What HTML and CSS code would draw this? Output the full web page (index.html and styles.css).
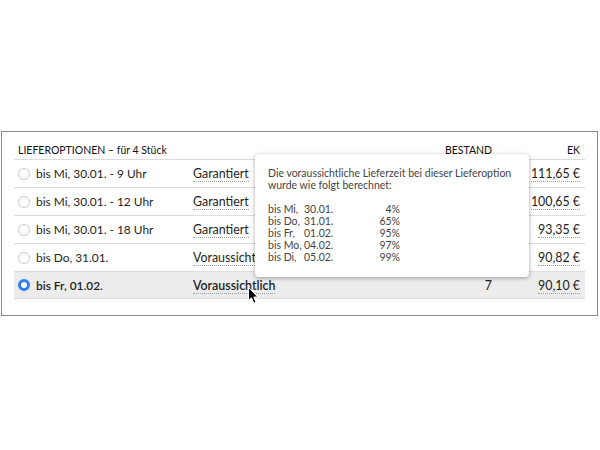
FILE: index.html
```html
<!DOCTYPE html>
<html lang="de">
<head>
<meta charset="utf-8">
<link rel="stylesheet" href="styles.css">
</head>
<body>
<div class="panel">
  <div class="table">
    <div class="row head">
      <div class="c1">LIEFEROPTIONEN&nbsp;– für 4 Stück</div>
      <div class="c2"></div>
      <div class="c3">BESTAND</div>
      <div class="c4">EK</div>
    </div>
    <div class="row">
      <div class="c1"><span class="radio"></span>bis Mi, 30.01. - 9 Uhr</div>
      <div class="c2"><span class="dot">Garantiert</span></div>
      <div class="c3"></div>
      <div class="c4"><span class="dot">111,65 €</span></div>
    </div>
    <div class="row">
      <div class="c1"><span class="radio"></span>bis Mi, 30.01. - 12 Uhr</div>
      <div class="c2"><span class="dot">Garantiert</span></div>
      <div class="c3"></div>
      <div class="c4"><span class="dot">100,65 €</span></div>
    </div>
    <div class="row">
      <div class="c1"><span class="radio"></span>bis Mi, 30.01. - 18 Uhr</div>
      <div class="c2"><span class="dot">Garantiert</span></div>
      <div class="c3"></div>
      <div class="c4"><span class="dot">93,35 €</span></div>
    </div>
    <div class="row">
      <div class="c1"><span class="radio"></span>bis Do, 31.01.</div>
      <div class="c2"><span class="dot">Voraussichtlich</span></div>
      <div class="c3"></div>
      <div class="c4"><span class="dot">90,82 €</span></div>
    </div>
    <div class="row selected">
      <div class="c1"><span class="radio on"></span>bis Fr, 01.02.</div>
      <div class="c2"><span class="dot">Voraussichtlich</span></div>
      <div class="c3">7</div>
      <div class="c4"><span class="dot">90,10 €</span></div>
    </div>
  </div>
  <div class="tooltip">
    <p>Die voraussichtliche Lieferzeit bei dieser Lieferoption<br>wurde wie folgt berechnet:</p>
    <div class="tt-table">
      <span>bis Mi,</span><span>30.01.</span><span class="pct">4%</span>
      <span>bis Do,</span><span>31.01.</span><span class="pct">65%</span>
      <span>bis Fr,</span><span>01.02.</span><span class="pct">95%</span>
      <span>bis Mo,</span><span>04.02.</span><span class="pct">97%</span>
      <span>bis Di,</span><span>05.02.</span><span class="pct">99%</span>
    </div>
  </div>
  <svg class="cursor" width="12" height="18" viewBox="0 0 12 18">
    <path d="M0.5 0.5 L0.5 13.5 L3.5 10.8 L5.8 16.3 L8 15.3 L5.8 10 L9.8 10 Z" fill="#000" stroke="#fff" stroke-width="1" stroke-linejoin="round"/>
  </svg>
</div>
</body>
</html>
```
FILE: styles.css
```css
html, body {
  margin: 0;
  padding: 0;
  background: #fff;
}
body {
  font-family: Lato, "Open Sans", sans-serif;
  color: #222;
  padding-top: 131px;
  padding-left: 1px;
}
.panel {
  position: relative;
  width: 597px;
  box-sizing: border-box;
  border: 1px solid #8a8a8a;
  padding: 12px 12px 16px 12px;
}
.row {
  display: grid;
  grid-template-columns: 179px 219px 80px 93px;
  height: 28px;
  align-items: center;
  border-top: 1px solid #dcdcdc;
  box-sizing: border-box;
  font-size: 12.4px;
  color: #1e1e1e;
}
.row .c1 {
  font-size: 11.9px;
}
.row.head {
  height: 15px;
  border-top: none;
  font-size: 10.5px;
  color: #111;
  align-items: start;
}
.row.head .c1 {
  font-size: 10.5px;
}
.row:last-child {
  border-bottom: 1px solid #dcdcdc;
}
.c1 {
  display: flex;
  align-items: center;
  padding-left: 4px;
  white-space: nowrap;
}
.c3 {
  text-align: right;
}
.c4 {
  text-align: right;
  padding-right: 5px;
}
.radio {
  width: 12px;
  height: 12px;
  box-sizing: border-box;
  border: 1px solid #c8c8c8;
  border-radius: 50%;
  background: #fff;
  margin-right: 6px;
  flex: none;
}
.radio.on {
  border: 3.5px solid #2f7ff0;
  background: #fff;
}
.selected {
  background: #ececec;
}
.selected .c1,
.selected .c2 {
  font-weight: 600;
}
.dot {
  border-bottom: 1px dotted #a0a0a0;
}
.tooltip {
  position: absolute;
  left: 253px;
  top: 22px;
  width: 274px;
  height: 123px;
  box-sizing: border-box;
  background: #fff;
  border-radius: 4px;
  box-shadow: 0 1px 4px rgba(0,0,0,0.35);
  padding: 13px 13px;
  font-size: 10.5px;
  line-height: 12px;
  color: #444;
}
.tooltip p {
  margin: 0 0 12px 0;
}
.tt-table {
  display: grid;
  grid-template-columns: 36px 50px 46px;
}
.pct {
  text-align: right;
}
.cursor {
  position: absolute;
  left: 246px;
  top: 155px;
}
```
